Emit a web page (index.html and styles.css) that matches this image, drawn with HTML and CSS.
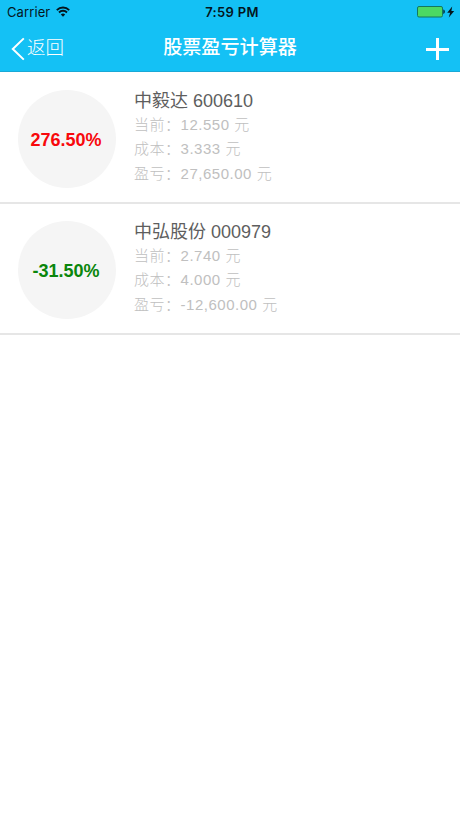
FILE: index.html
```html
<!DOCTYPE html>
<html lang="zh-CN">
<head>
    <meta charset="UTF-8">
    <meta name="viewport" content="width=device-width, initial-scale=1.0">
    <title>股票盈亏计算器</title>
    <link rel="stylesheet" href="styles.css">
</head>
<body>
    <header>
        <div class="status-bar">
            <div class="status-left">
                <span class="carrier">Carrier</span>
                <svg class="wifi" width="14" height="11" viewBox="0 0 14 11">
                    <path d="M0.8 4.1a8.8 8.8 0 0 1 12.4 0M3 6.5a5.6 5.6 0 0 1 8 0" fill="none" stroke="#04161d" stroke-width="1.9"/>
                    <path d="M7 10.8L4.8 8.5a3.1 3.1 0 0 1 4.4 0z" fill="#04161d"/>
                </svg>
            </div>
            <div class="time">7:59 PM</div>
            <div class="status-right">
                <svg width="38" height="12" viewBox="0 0 38 12">
                    <rect x="0.5" y="0.5" width="25" height="10.5" rx="1.5" fill="#4cd964" stroke="#14785f"/>
                    <path d="M26.4 3.6c1.8.3 1.8 4 0 4.4z" fill="#04161d"/>
                    <path d="M35.2 0.6l-5 6.1h2.9l-1.3 4.7 5.4-6.5h-2.8z" fill="#04161d"/>
                </svg>
            </div>
        </div>
        <nav class="nav-bar">
            <a class="back">
                <svg width="14" height="24" viewBox="0 0 14 24">
                    <path d="M12.8 1.4L1.8 12l11 10.6" fill="none" stroke="#fff" stroke-width="2"/>
                </svg>
                <span>返回</span>
            </a>
            <h1>股票盈亏计算器</h1>
            <a class="add">
                <svg width="24" height="24" viewBox="0 0 24 24">
                    <path d="M12.5 1v22M1 12.5h23" fill="none" stroke="#fff" stroke-width="3"/>
                </svg>
            </a>
        </nav>
    </header>

    <ul class="stock-list">
        <li class="stock">
            <div class="rate up">276.50%</div>
            <div class="info">
                <h2>中毅达 600610</h2>
                <p>当前：12.550 元</p>
                <p>成本：3.333 元</p>
                <p>盈亏：27,650.00 元</p>
            </div>
        </li>
        <li class="stock">
            <div class="rate down">-31.50%</div>
            <div class="info">
                <h2>中弘股份 000979</h2>
                <p>当前：2.740 元</p>
                <p>成本：4.000 元</p>
                <p>盈亏：-12,600.00 元</p>
            </div>
        </li>
    </ul>
</body>
</html>
```

FILE: styles.css
```css
body {
    font-family: 'Liberation Sans', 'Noto Sans CJK SC', sans-serif;
    margin: 0;
    background-color: #fff;
}

header {
    box-sizing: border-box;
    height: 72px;
    background-color: #14c1f5;
    border-bottom: 1px solid #1aa9d6;
}

.status-bar {
    display: grid;
    grid-template-columns: 1fr auto 1fr;
    align-items: center;
    height: 24px;
    padding: 0 5px 0 7px;
    font-family: Inter, 'Liberation Sans', sans-serif;
    font-size: 13px;
    color: #04161d;
}

.status-left {
    display: flex;
    align-items: center;
    gap: 6px;
}

.carrier {
    letter-spacing: 0.1px;
}

.wifi {
    margin-top: -2px;
}

.time {
    padding-left: 2px;
    font-weight: 600;
    letter-spacing: 0.3px;
}

.status-right {
    display: flex;
    justify-content: flex-end;
}

.nav-bar {
    display: grid;
    grid-template-columns: 1fr auto 1fr;
    align-items: center;
    height: 47px;
    padding: 0 11px;
    color: #fff;
}

.nav-bar h1 {
    margin: 0;
    font-size: 19.1px;
    line-height: 47px;
    font-weight: 500;
}

.back {
    display: flex;
    align-items: center;
    gap: 2px;
    font-size: 18.5px;
    font-weight: 300;
}

.back svg {
    margin-top: 3px;
}

.back span {
    line-height: 47px;
}

.add {
    display: flex;
    justify-content: flex-end;
    margin-top: 3px;
}

.stock-list {
    margin: 0;
    padding: 0;
    list-style: none;
}

.stock {
    box-sizing: border-box;
    display: flex;
    gap: 18px;
    height: 131px;
    padding: 17px 18px 0;
    border-bottom: 2px solid #e6e6e6;
}

.stock:first-child {
    height: 132px;
    padding-top: 18px;
}

.rate {
    box-sizing: border-box;
    width: 98px;
    height: 98px;
    padding-right: 2px;
    border-radius: 50%;
    background-color: #f5f5f5;
    font-size: 18px;
    font-weight: bold;
    line-height: 100px;
    text-align: center;
}

.up {
    color: #f8080c;
}

.down {
    color: #0a860c;
}

.info h2 {
    margin: 0;
    font-size: 18px;
    font-weight: 400;
    line-height: 23px;
    color: #5e5e5e;
}

.info p {
    margin: 0;
    font-size: 15px;
    font-weight: 300;
    line-height: 24.4px;
    letter-spacing: 0.52px;
    color: #c0c0c0;
}
```
